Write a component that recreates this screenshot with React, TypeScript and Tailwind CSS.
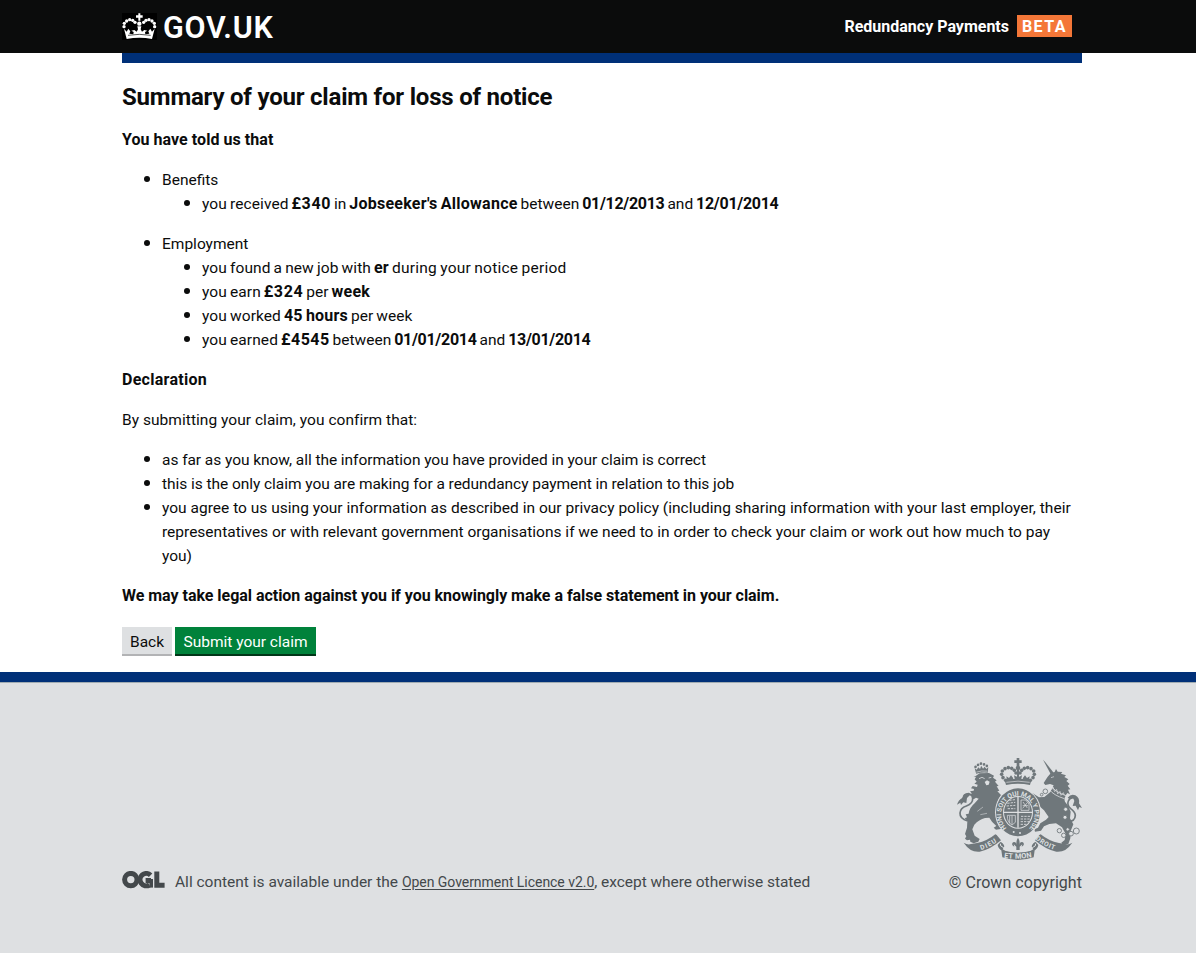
import type { ReactNode } from 'react';

function HeaderCrown() {
  const beads = [
    [42, 79], [43, 69], [50, 62], [59, 58], [68, 60], [75, 66],
    [134, 79], [133, 69], [126, 62], [117, 58], [108, 60], [101, 66],
  ];
  return (
    <svg className="block h-[27px] w-[35px] bg-black" viewBox="36 38 105 81" fill="#fff">
      {beads.map(([x, y]) => <circle key={`${x}-${y}`} cx={x} cy={y} r="5" />)}
      <circle cx="88" cy="70" r="6.5" />
      <path d="M85 39h6v6h7v7h-7v9h-6v-9h-7v-7h7z" />
      <path d="M42 85l8 9 5-9 6 8-3 7 12 2 1-7-7-4 9-2 7 5 4-7-2-9h12l-2 9 4 7 7-5 9 2-7 4 1 7 12-2-3-7 6-8 5 9 8-9-8 31q-38-7-76 0z" />
      <path d="M54 105q34-6 68 0" stroke="#000" strokeWidth="2" fill="none" />
    </svg>
  );
}

function RoyalArms() {
  const arch = [
    [197, 91], [189, 83], [185, 73], [187, 63], [195, 56], [205, 53], [215, 55], [223, 61], [228, 69],
  ];
  return (
    <svg className="block h-[102px] w-[125px]" viewBox="51 24 375 306" fill="#6f777b" stroke="none">
      {/* imperial crown */}
      <path d="M230 24h8v7h7v8h-7v9h-8v-9h-7v-8h7z" />
      <circle cx="234" cy="54" r="7" />
      {arch.map(([x, y]) => (
        <g key={`${x}-${y}`}>
          <circle cx={x} cy={y} r="5.4" />
          <circle cx={468 - x} cy={y} r="5.4" />
        </g>
      ))}
      <path d="M231 60h6v32h-6z" />
      <path d="M199 79l8 5 6-8 7 9-4 8h-15z" />
      <path d="M269 79l-8 5-6-8-7 9 4 8h15z" />
      <path d="M222 76l8 4 4-9 4 9 8-4-3 16h-18zM194 90q40-8 80 0l-4 15q-36-7-72 0z" />
      <path d="M199 97q35-7 70 0" fill="none" stroke="#dee0e2" strokeWidth="2" />
      {/* lion crown */}
      <g transform="rotate(-5 124 54)">
        <circle cx="124" cy="41" r="4" />
        <circle cx="107" cy="49" r="4" /><circle cx="115" cy="44" r="4" />
        <circle cx="133" cy="44" r="4" /><circle cx="141" cy="49" r="4" />
        <path d="M104 53l6 5 5-7 5 6 4-10 5 10 5-6 5 7 6-5-3 17q-17-4-35 0z" />
        <path d="M108 65q16-4 33 0" fill="none" stroke="#dee0e2" strokeWidth="1.8" />
      </g>
      {/* lion */}
      <path d="M107 78l12-8 28-1 15 8-3 6 11 8-5 4 11 13-6 1 8 13-6 2 11 11q-12 16-14 39l7 25q3 17 17 31l-7 6-18 3-7-6 8-5-13-13-8-12-13 1q-18 5-32 20l-6 14 7 19 15 10-4 8-14 5-10-5-1-6-9 2-6-5 4-7-4-7 6-19 1-20-8-8 7-3-4-9 9-2q3-19 18-31l12-14-8-3-7 5-6-4 4-5-8-3 4-6-5-6 11-2 1-5-9-2 5-7 13 3 2-7-10-3 7-6-6-7 4-7-7-3z" />
      <path d="M117 86l9-4 8 4M146 84l8-2" fill="none" stroke="#dee0e2" strokeWidth="2.4" />
      <path d="M134 96l7-5 8 4-3 9-7 2z" fill="#dee0e2" />
      <path d="M112 184l17-13M121 194l20-4" fill="none" stroke="#dee0e2" strokeWidth="1.6" />
      <path d="M83 213q-24-7-23-24 1-15 19-21 20-8 19-23-1-14-15-12-12 3-17 19" fill="none" stroke="#6f777b" strokeWidth="5" />
      <path d="M51 164q4-15 17-21-1-13 18-15l7 4-12 12-2 15-9-2-7 8-2-7z" />
      {/* unicorn */}
      <path d="M309 29l7 8 25 31-8 6z" />
      <path d="M322 82l10-12 12-4 4-9 5 8 14 1-4 5 15 5-5 5 12 7-6 5 10 9-6 5 8 11-7 1 6 14-8-4q-12 15-7 26 12 12 17 30l-2 20 10 18-8 20-1 22-6 17-17 3-4-7 10-8 3-18-11-20-18-12-20 2-16 7-9 13-18 3-2-7 11-5 7-13 17-11 8-8-14-20-11-10-8 6-11-9 2-6 8 1 1-10-15-13-7 2-2-7 8-6 20 13 16-1 18-15 10-20-11-4-14 3-5-6z" />
      <path d="M333 83l9-3" stroke="#dee0e2" strokeWidth="2" />
      <path d="M333 108q13 18 45 29M327 118q14 18 46 28" fill="none" stroke="#dee0e2" strokeWidth="2.4" />
      <path d="M335 119l4-8 5 14 6-7 3 14 7-8 3 12 7-8 3 8" fill="none" stroke="#dee0e2" strokeWidth="2" />
      <path d="M381 216q25-1 25-20-1-11-14-20-12-10-7-23 6-14 21-9" fill="none" stroke="#6f777b" strokeWidth="5" />
      <path d="M383 143q10-13 23-7 14 8 11 24l9 14-8-3-4 10-7-14-9 1 5-15-4-10-10 5z" />
      <g fill="#dee0e2" stroke="#6f777b" strokeWidth="2.6">
        <circle cx="316" cy="124" r="7" /><circle cx="305" cy="134" r="4" />
        <circle cx="377" cy="178" r="6" /><circle cx="375" cy="202" r="6" />
        <circle cx="358" cy="242" r="6.5" /><circle cx="371" cy="256" r="6.5" />
        <circle cx="383" cy="238" r="5" /><circle cx="393" cy="251" r="7" /><circle cx="409" cy="243" r="9" />
      </g>
      {/* garter */}
      <ellipse cx="234" cy="187" rx="69" ry="75" fill="#dee0e2" />
      <ellipse cx="234" cy="187" rx="66" ry="72" />
      <ellipse cx="234" cy="187" rx="45" ry="49" fill="#dee0e2" />
      <ellipse cx="234" cy="187" rx="42" ry="46" />
      <path id="garter" d="M199 235A51 57 0 1 1 269 235" fill="none" />
      <text fontFamily="Roboto" fontSize="20" fontWeight="700" fill="#dee0e2" dy="1">
        <textPath href="#garter" textLength="262" lengthAdjust="spacingAndGlyphs">HONI SOIT QUI MAL Y PENSE</textPath>
      </text>
      <path d="M234 141v92M192 187h84" stroke="#dee0e2" strokeWidth="4" />
      <path d="M202 160l24-3M200 168l26-2M203 176h23M208 151l17-2M242 215h25M242 207h29M243 199h29M242 223h18" fill="none" stroke="#dee0e2" strokeWidth="2.6" strokeDasharray="7 3" />
      <path d="M243 150h14l10 12v19h-24zM249 156l13 18M262 158l-14 17M248 167h16" fill="none" stroke="#dee0e2" strokeWidth="2.2" />
      <path d="M202 196h24v21l-10 8q-15-8-14-29M209 198v22M216 197v26" fill="none" stroke="#dee0e2" strokeWidth="2.2" />
      <circle cx="221" cy="246" r="3" fill="#dee0e2" /><circle cx="240" cy="249" r="3" fill="#dee0e2" />
      {/* motto ribbon */}
      <path d="M71 278q10 6 18 5l22-4q31-6 55-26l4 2 13 16q-32 28-64 34-28 3-48-27z" />
      <path d="M397 278q-10 6-18 5l-22-4q-31-6-55-26l-4 2-13 16q32 28 64 34 28 3 48-27z" />
      <path d="M181 276l-8 9q2 12 15 19 46 18 92 0 13-7 15-19l-8-9q-9 2-12 13l5 9-9 5q-37 11-74 0l-9-5 5-9q-3-11-12-13z" />
      <path d="M181 281q-2 8 10 12M287 281q2 8-10 12" stroke="#dee0e2" strokeWidth="3" fill="none" />
      <path d="M184 301q50 16 100 0l-3 21q-47 16-94 0z" />
      <path id="dieu" d="M123 300Q153 291 180 269" fill="none" />
      <path id="mon" d="M192 323Q234 330 280 321" fill="none" />
      <path id="droit" d="M286 267Q310 290 348 301" fill="none" />
      <g fontFamily="Roboto" fontSize="20" fontWeight="700" fill="#dee0e2">
        <text><textPath href="#dieu" textLength="54">DIEU</textPath></text>
        <text fontSize="22"><textPath href="#mon" textLength="84">ET MON</textPath></text>
        <text><textPath href="#droit" textLength="66">DROIT</textPath></text>
      </g>
      {/* fleur */}
      <path d="M234 263q8 12 3 22 3-12 12-8 7 8-4 13l2-7-8 7v10h-10v-10l-8-7 2 7q-11-5-4-13 9-4 12 8-5-10 3-22z" />
    </svg>
  );
}

function OglLogo() {
  return (
    <svg className="mt-[11px] block h-[18px] w-[43px] shrink-0" viewBox="0 0 43 18" fill="none" stroke="#43484b" strokeWidth="5">
      <circle cx="8.8" cy="8.6" r="6.2" />
      <path d="M28.6 4.2A6.2 6.2 0 1 0 27.4 14M29 9.6H23.6" />
      <path d="M29.2 8v8.6" strokeWidth="3.6" />
      <path d="M34.8 0.4V14.2H42.6" />
    </svg>
  );
}

const B = ({ children, t = '' }: { children: ReactNode; t?: string }) => (
  <strong className={`text-[16px] font-bold ${t}`}>{children}</strong>
);
const S = ({ children, t }: { children: ReactNode; t: string }) => <span className={t}>{children}</span>;

function Item({ children }: { children: ReactNode }) {
  return (
    <li className="relative h-6 whitespace-nowrap before:absolute before:top-[8px] before:-left-[18px] before:size-[6px] before:rounded-full before:bg-[#0b0c0c] before:content-['']">
      {children}
    </li>
  );
}

export default function App() {
  return (
    <div className="flex min-h-[953px] flex-col bg-white font-['Roboto',sans-serif] text-[15.5px] leading-6 text-[#0b0c0c]">
      <header className="flex h-[53px] shrink-0 bg-[#0b0c0c] pr-[124px] pl-[122px] text-white">
        <div className="pt-[13px]"><HeaderCrown /></div>
        <div className="ml-[6px] pt-[8px] text-[30.5px] leading-[40px] font-semibold tracking-[0.75px]">GOV.UK</div>
        <div className="ml-auto flex pt-[15px]">
          <span className="mr-[8px] text-[16px] leading-[23px] font-bold">Redundancy Payments</span>
          <span className="h-[22px] w-[55px] bg-[#f47738] pl-[5px] text-[16px] leading-[23px] font-bold tracking-[1.4px]">BETA</span>
        </div>
      </header>
      <main className="ml-[122px] h-[619px] w-[960px] border-t-[10px] border-[#003078]">
        <h1 className="pt-[18px] text-[24px] leading-[32px] font-bold tracking-[-0.21px] whitespace-nowrap">Summary of your claim for loss of notice</h1>
        <p className="mt-[15px]"><B t="tracking-[0.05px]">You have told us that</B></p>
        <ul className="mt-4 pl-10">
          <Item>Benefits</Item>
          <li>
            <ul className="pl-10 [word-spacing:-0.9px]">
              <Item><S t="tracking-[0.1px]">you received</S> <B t="tracking-[0.6px]">£340</B> in <B t="tracking-[0.25px]">Jobseeker's Allowance</B> between <B t="tracking-[-0.3px]">01/12/2013</B> and <B t="tracking-[-0.3px]">12/01/2014</B></Item>
            </ul>
          </li>
        </ul>
        <ul className="mt-4 pl-10">
          <Item>Employment</Item>
          <li>
            <ul className="pl-10 [word-spacing:-0.9px]">
              <Item><S t="tracking-[0.1px]">you found a new job with</S> <B t="tracking-[0.3px]">er</B> <S t="tracking-[0.25px]">during your notice period</S></Item>
              <Item><S t="tracking-[0.1px]">you earn</S> <B t="tracking-[0.6px]">£324</B> <S t="tracking-[0.1px]">per</S> <B t="tracking-[0.2px]">week</B></Item>
              <Item><S t="tracking-[0.1px]">you worked</S> <B t="tracking-[0.2px]">45 hours</B> <S t="tracking-[0.05px]">per week</S></Item>
              <Item><S t="tracking-[0.1px]">you earned</S> <B t="tracking-[0.5px]">£4545</B> between <B t="tracking-[-0.3px]">01/01/2014</B> and <B t="tracking-[-0.3px]">13/01/2014</B></Item>
            </ul>
          </li>
        </ul>
        <p className="mt-4"><B t="tracking-[0.27px]">Declaration</B></p>
        <p className="mt-4 tracking-[0.04px]">By submitting your claim, you confirm that:</p>
        <ul className="mt-4 pl-10">
          <Item><S t="tracking-[-0.05px]">as far as you know, all the information you have provided in your claim is correct</S></Item>
          <Item><S t="tracking-[-0.05px]">this is the only claim you are making for a redundancy payment in relation to this job</S></Item>
          <Item><S t="tracking-[0.015px]">you agree to us using your information as described in our privacy policy (including sharing information with your last employer, their</S></Item>
          <li className="whitespace-nowrap">representatives or with relevant government organisations if we need to in order to check your claim or work out how much to pay<br />you)</li>
        </ul>
        <p className="mt-4"><B t="tracking-[-0.03px]">We may take legal action against you if you knowingly make a false statement in your claim.</B></p>
        <div className="mt-[19px] flex gap-[3px]">
          <button className="h-[29px] w-[50px] border-b-2 border-[#b2b3b5] bg-[#dee0e2] pt-[2px] whitespace-nowrap">Back</button>
          <button className="h-[29px] w-[141px] border-b-2 border-[#003618] bg-[#00823b] pt-[2px] whitespace-nowrap text-white">Submit your claim</button>
        </div>
      </main>
      <footer className="h-[281px] shrink-0 border-t-[10px] border-[#003078] bg-[#dee0e2] text-[#43484b]">
        <div className="flex h-[271px] items-start justify-between border-t border-[#a1acb2] pr-[114px] pl-[122px]">
          <div className="mt-[177px] flex">
            <OglLogo />
            <p className="mt-[10px] ml-[10px] whitespace-nowrap">All content is available under the <a href="#" className="text-[14px] tracking-[-0.04px] underline underline-offset-2">Open Government Licence v2.0</a><S t="tracking-[-0.04px]">, except where otherwise stated</S></p>
          </div>
          <div className="mt-[75px] flex flex-col items-end">
            <RoyalArms />
            <p className="mt-[11px] text-[16px] tracking-[0.04px] whitespace-nowrap">© Crown copyright</p>
          </div>
        </div>
      </footer>
    </div>
  );
}
